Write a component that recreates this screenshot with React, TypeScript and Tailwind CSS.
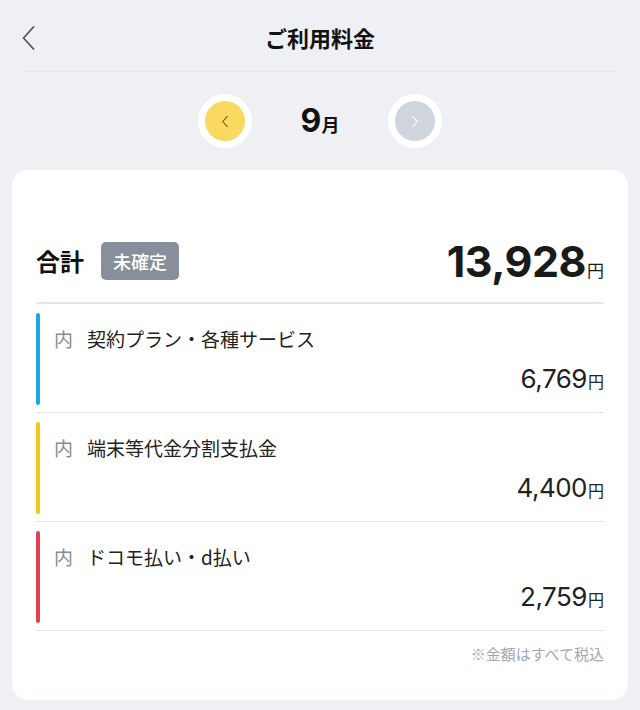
import { ReactNode } from "react";

const JP = "font-['Noto_Sans_CJK_JP','Noto_Sans',sans-serif]";
const NUM = "font-['Inter','Noto_Sans_CJK_JP',sans-serif]";

type Item = { label: string; amount: string; bar: string };

const ITEMS: Item[] = [
  { label: "契約プラン・各種サービス", amount: "6,769", bar: "bg-[#1ea7e4]" },
  { label: "端末等代金分割支払金", amount: "4,400", bar: "bg-[#f6c619]" },
  { label: "ドコモ払い・d払い", amount: "2,759", bar: "bg-[#e3404f]" },
];

function Chevron({ dir, className }: { dir: "left" | "right"; className?: string }) {
  return (
    <svg viewBox="0 0 12 24" className={className} fill="none" stroke="currentColor" strokeLinecap="round" strokeLinejoin="round">
      {dir === "left" ? <path d="M11 1 L1 12 L11 23" /> : <path d="M1 1 L11 12 L1 23" />}
    </svg>
  );
}

function MonthButton({ dir, active }: { dir: "left" | "right"; active: boolean }) {
  return (
    <button
      type="button"
      className="w-[54px] h-[54px] rounded-full bg-white flex items-center justify-center"
    >
      <span
        className={
          active
            ? "w-[40px] h-[40px] rounded-full bg-[#f9d95f] flex items-center justify-center text-[#5b4e2a]"
            : "w-[40px] h-[40px] rounded-full bg-[#cfd4dd] flex items-center justify-center text-white"
        }
      >
        <Chevron dir={dir} className="w-[6px] h-[11px] stroke-[2.2]" />
      </span>
    </button>
  );
}

function Yen({ children, size }: { children: ReactNode; size: string }) {
  return <span className={`${JP} ${size} font-normal ml-[1px]`}>{children}</span>;
}

function ItemRow({ item }: { item: Item }) {
  return (
    <div className="pt-[9px] pb-[7px] border-b border-[#e3e5ea]">
      <div className="flex">
        <div className={`w-[4px] h-[92px] rounded-full ${item.bar}`} />
        <div className="flex-1 flex flex-col pl-[14px]">
          <div className={`${JP} h-[52px] flex items-center text-[19px] text-[#222]`}>
            <span className="text-[#878c95] mr-[14px]">内</span>
            {item.label}
          </div>
          <div className="flex justify-end items-baseline text-[#222] leading-[28px]">
            <span className={`${NUM} text-[26px] tracking-[-0.5px]`}>{item.amount}</span>
            <Yen size="text-[16px]">円</Yen>
          </div>
        </div>
      </div>
    </div>
  );
}

export default function App() {
  return (
    <div className={`${JP} w-[640px] h-[710px] bg-[#eef0f4] overflow-hidden`}>
      <header className="relative h-[72px] mx-5 flex items-center justify-center border-b border-[#e6e8ec]">
        <button type="button" className="absolute left-[2px] top-[26px] text-[#555]">
          <Chevron dir="left" className="w-[13px] h-[24px] stroke-[1.8]" />
        </button>
        <h1 className="text-[22px] font-bold text-[#111] pt-[4px]">ご利用料金</h1>
      </header>

      <div className="h-[96px] flex items-center justify-center pt-[2px]">
        <MonthButton dir="left" active />
        <div className="w-[136px] flex items-baseline justify-center text-[#111] font-bold">
          <span className={`${NUM} text-[32px]`}>9</span>
          <span className="text-[18px]">月</span>
        </div>
        <MonthButton dir="right" active={false} />
      </div>

      <section className="mx-3 mt-[2px] h-[530px] bg-white rounded-[16px] px-6 pt-[67px]">
        <div className="h-[48px] flex items-center">
          <span className="text-[24px] font-bold text-[#111]">合計</span>
          <span className="ml-[17px] h-[38px] px-[12px] rounded-[5px] bg-[#878f9a] text-white text-[18px] font-medium flex items-center">
            未確定
          </span>
          <div className="ml-auto flex items-baseline text-[#1a1a1a]">
            <span className={`${NUM} text-[43px] font-bold tracking-[-0.5px]`}>13,928</span>
            <Yen size="text-[17px]">円</Yen>
          </div>
        </div>
        <div className="mt-[17px] h-[2px] bg-[#e3e5ea]" />
        {ITEMS.map((item) => (
          <ItemRow key={item.label} item={item} />
        ))}
        <p className="mt-[12px] text-right text-[15px] text-[#a3a7ae]">※金額はすべて税込</p>
      </section>
    </div>
  );
}
